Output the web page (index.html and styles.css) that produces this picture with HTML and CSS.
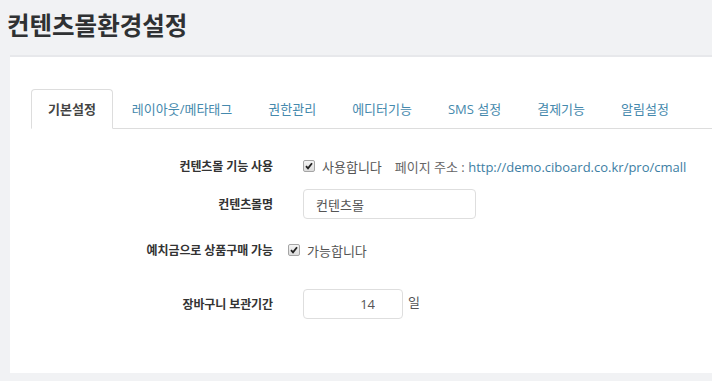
FILE: index.html
```html
<!DOCTYPE html>
<html lang="ko">

<head>
  <meta charset="UTF-8" />
  <meta name="viewport" content="width=device-width, initial-scale=1.0" />
  <title>컨텐츠몰환경설정</title>
  <link rel="stylesheet" href="styles.css">
</head>

<body>
  <h1 class="page-title">컨텐츠몰환경설정</h1>

  <div class="box">
    <ul class="tabs">
      <li class="tab active">기본설정</li>
      <li class="tab">레이아웃/메타태그</li>
      <li class="tab">권한관리</li>
      <li class="tab">에디터기능</li>
      <li class="tab">SMS 설정</li>
      <li class="tab">결제기능</li>
      <li class="tab">알림설정</li>
    </ul>

    <form class="settings">
      <div class="row row-use">
        <label class="row-label">컨텐츠몰 기능 사용</label>
        <div class="row-field">
          <span class="check">
            <svg width="8" height="8" viewBox="0 0 8 8"><path d="M1 4.2 L3 6.4 L7 1.2" fill="none" stroke="#222" stroke-width="1.8"/></svg>
          </span>
          <span class="check-text">사용합니다</span>
          <span class="help">페이지 주소 : <a href="#" class="link">http://demo.ciboard.co.kr/pro/cmall</a></span>
        </div>
      </div>

      <div class="row row-name">
        <label class="row-label">컨텐츠몰명</label>
        <div class="row-field">
          <input class="input input-name" type="text" value="컨텐츠몰">
        </div>
      </div>

      <div class="row row-deposit">
        <label class="row-label">예치금으로 상품구매 가능</label>
        <div class="row-field field-tight">
          <span class="check">
            <svg width="8" height="8" viewBox="0 0 8 8"><path d="M1 4.2 L3 6.4 L7 1.2" fill="none" stroke="#222" stroke-width="1.8"/></svg>
          </span>
          <span class="check-text">가능합니다</span>
        </div>
      </div>

      <div class="row row-cart">
        <label class="row-label">장바구니 보관기간</label>
        <div class="row-field">
          <input class="input input-days" type="text" value="14">
          <span class="unit">일</span>
        </div>
      </div>
    </form>
  </div>
</body>

</html>
```

FILE: styles.css
```css
body {
  margin: 0;
  background-color: #f1f2f4;
  font-family: "Open Sans", "Noto Sans CJK KR", sans-serif;
  font-size: 13px;
  color: #333;
}

.page-title {
  margin: 0;
  padding: 10px 7px 0;
  height: 45px;
  box-sizing: border-box;
  font-family: "Noto Sans CJK KR", sans-serif;
  font-size: 24.5px;
  font-weight: bold;
  line-height: 30px;
  color: #2f3133;
}

.box {
  margin-left: 10px;
  margin-top: 10px;
  height: 318px;
  box-sizing: border-box;
  background-color: #fff;
  border-top: 2px solid #e7e8eb;
  padding: 32px 0 0 21px;
}

/* tabs */
.tabs {
  display: flex;
  margin: 0;
  padding: 0;
  list-style: none;
  border-bottom: 1px solid #dddddd;
}

.tab {
  padding: 0 16px;
  margin-right: 2px;
  margin-bottom: -1px;
  height: 38px;
  line-height: 38px;
  color: #4589ad;
  border: 1px solid transparent;
  border-radius: 4px 4px 0 0;
  font-size: 13px;
}

.tab.active {
  color: #444;
  font-weight: bold;
  border-color: #dddddd;
  border-bottom-color: #fff;
  background-color: #fff;
}

/* form rows */
.row {
  display: flex;
  align-items: center;
  height: 30px;
}

.row-label {
  width: 242px;
  text-align: right;
  font-size: 12px;
  font-weight: bold;
  color: #333;
  letter-spacing: -0.1px;
}

.row-field {
  display: flex;
  align-items: center;
  padding-left: 30px;
  color: #555;
}

.field-tight {
  padding-left: 15px;
}

.row-use {
  margin-top: 22px;
}

.row-name {
  margin-top: 8px;
}

.row-deposit {
  margin-top: 16px;
}

.row-cart {
  margin-top: 24px;
}

.check {
  display: inline-flex;
  align-items: center;
  justify-content: center;
  width: 10px;
  height: 10px;
  border: 1px solid #a5a5a5;
  border-radius: 2px;
  background: linear-gradient(#f4f4f4, #dcdcdc);
  margin-right: 7px;
}

.check-text {
  color: #555;
}

.help {
  margin-left: 13px;
  color: #666;
}

.link {
  color: #3d7ea3;
  text-decoration: none;
}

.input {
  height: 30px;
  box-sizing: border-box;
  border: 1px solid #dedede;
  border-radius: 4px;
  font-family: "Open Sans", "Noto Sans CJK KR", sans-serif;
  font-size: 13px;
  color: #555;
  padding: 0 12px;
  outline: none;
}

.input-name {
  width: 173px;
}

.input-days {
  width: 100px;
  text-align: right;
  padding-right: 27px;
}

.unit {
  margin-left: 5px;
  color: #555;
  position: relative;
  top: -3px;
}
```
